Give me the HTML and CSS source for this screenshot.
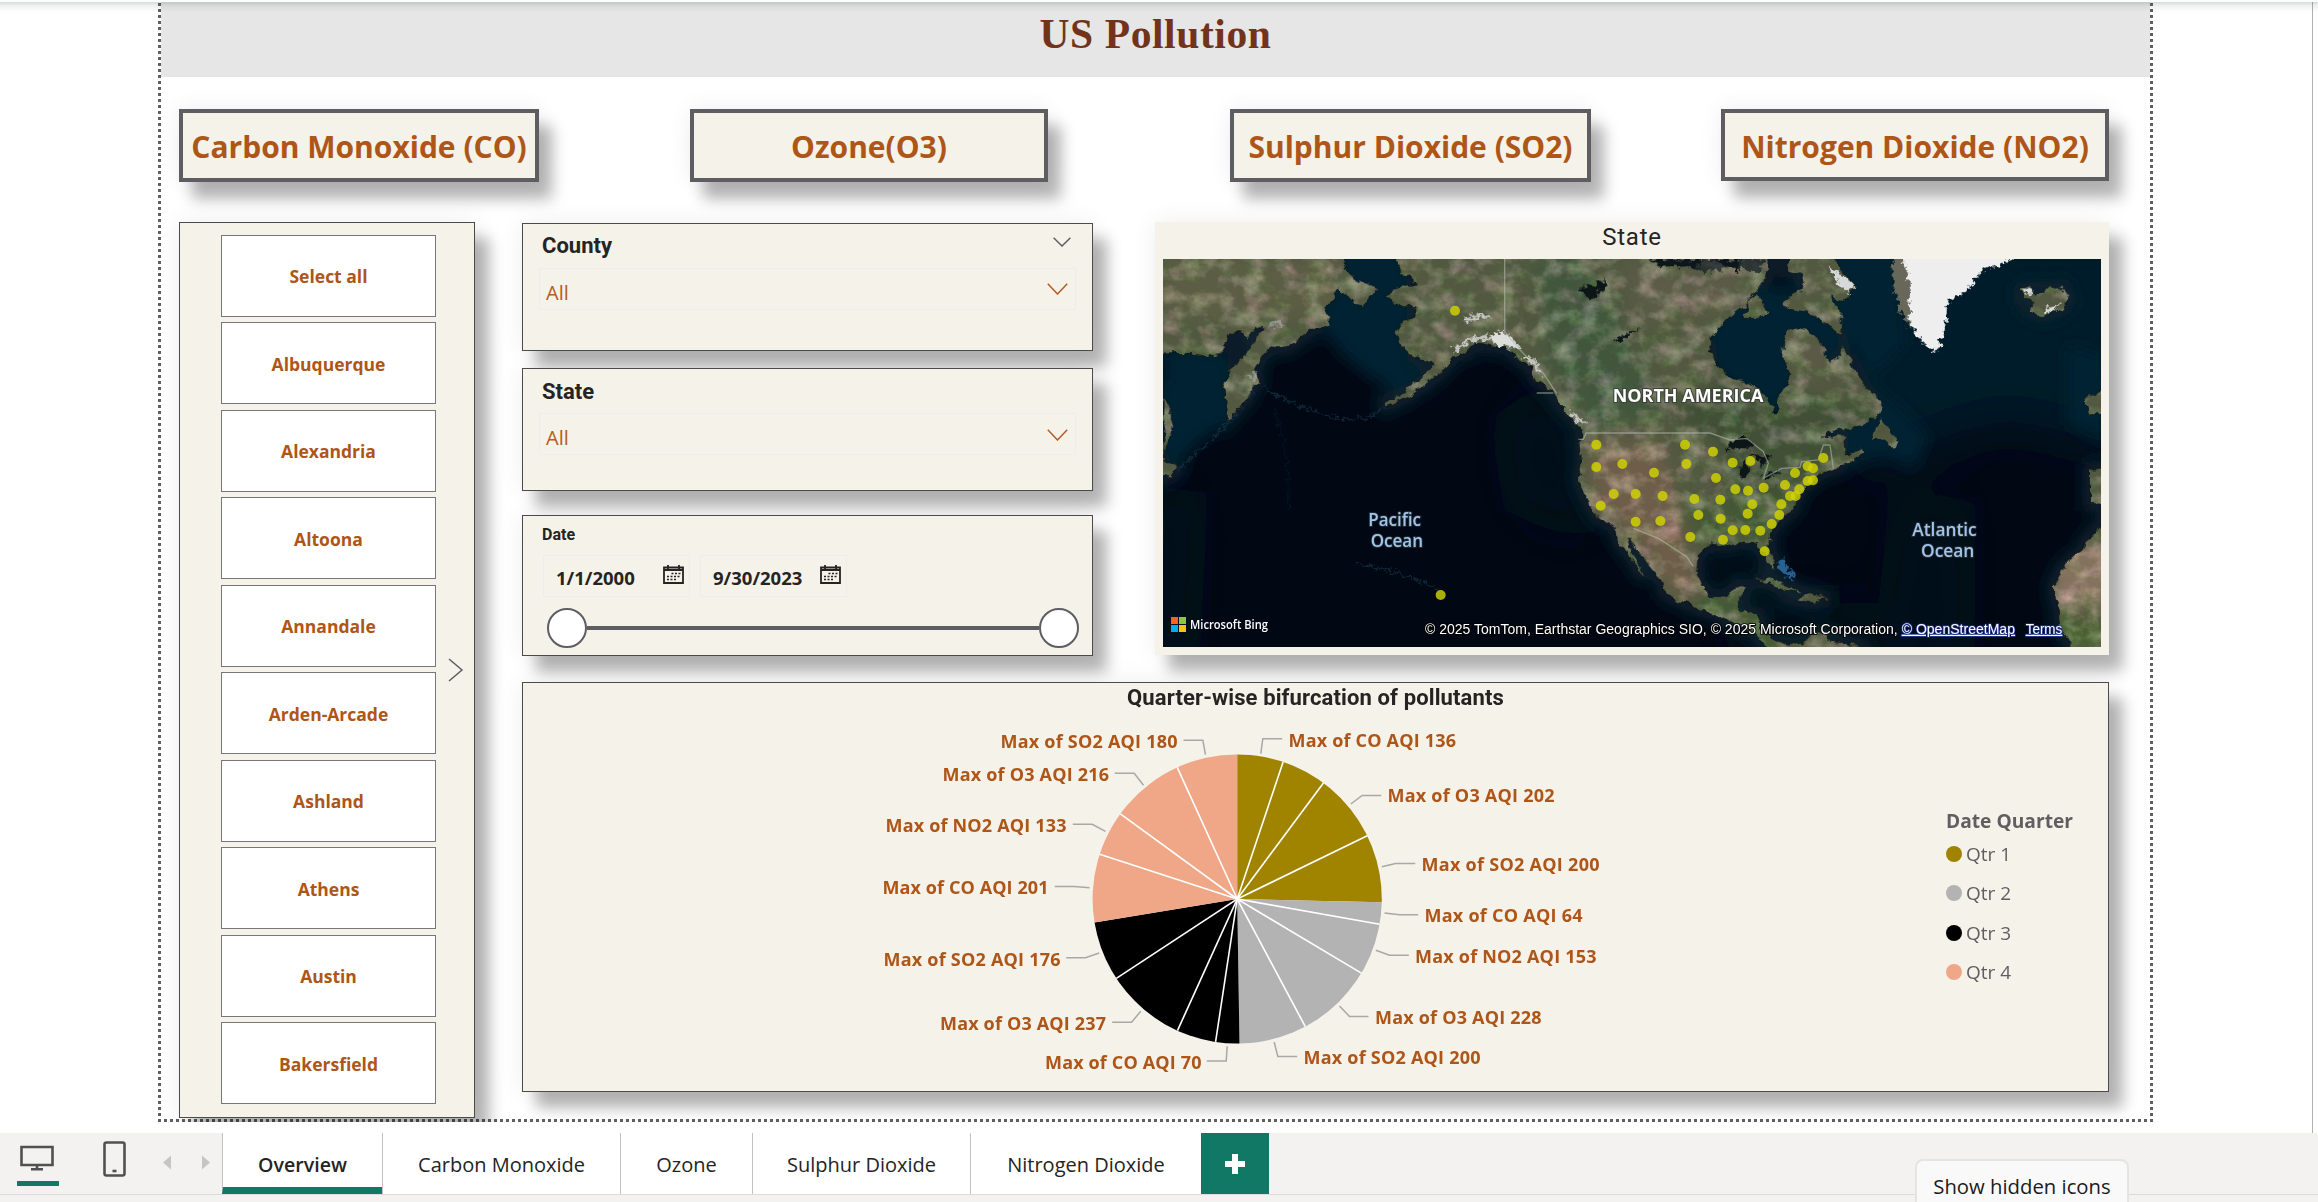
FILE: index.html
```html
<!DOCTYPE html>
<html lang="en">
<head>
<meta charset="utf-8">
<title>US Pollution</title>
<link rel="stylesheet" href="styles.css">
</head>
<body>
<main class="workspace">
  <section class="report">
    <header class="banner"><h1>US Pollution</h1></header>
    <nav class="pollutants">
      <a class="pollutant co"><span>Carbon Monoxide (CO)</span></a>
      <a class="pollutant o3"><span>Ozone(O3)</span></a>
      <a class="pollutant so2"><span>Sulphur Dioxide (SO2)</span></a>
      <a class="pollutant no2"><span>Nitrogen Dioxide (NO2)</span></a>
    </nav>
    <div class="body">
      <aside class="card cities">
        <ul class="city-list">
          <li><span>Select all</span></li>
          <li><span>Albuquerque</span></li>
          <li><span>Alexandria</span></li>
          <li><span>Altoona</span></li>
          <li><span>Annandale</span></li>
          <li><span>Arden-Arcade</span></li>
          <li><span>Ashland</span></li>
          <li><span>Athens</span></li>
          <li><span>Austin</span></li>
          <li><span>Bakersfield</span></li>
        </ul>
        <svg class="next" width="16" height="24" viewBox="0 0 16 24"><path d="M1 1 14 12 1 23"/></svg>
      </aside>
      <div class="visuals">
        <div class="filters">
          <section class="card filter county">
            <div class="filter-head"><h2>County</h2><svg class="chev" width="18" height="10" viewBox="0 0 18 10"><path d="M.6.8 9 9 17.4.8"/></svg></div>
            <div class="select"><span>All</span><svg class="chev brown" width="21" height="12" viewBox="0 0 21 12"><path d="M.8.8 10.5 11 20.2.8"/></svg></div>
          </section>
          <section class="card filter state">
            <div class="filter-head"><h2>State</h2></div>
            <div class="select"><span>All</span><svg class="chev brown" width="21" height="12" viewBox="0 0 21 12"><path d="M.8.8 10.5 11 20.2.8"/></svg></div>
          </section>
          <section class="card date">
            <h2>Date</h2>
            <div class="dates">
              <div class="date-input"><span>1/1/2000</span><svg class="cal" width="21" height="19" viewBox="0 0 21 19"><path d="M1 2.500h19v15.500H1zM1 5h19M5 0v4M16 0v4"/><path class="grid" d="M8.500 8.500h9M4 11.500h13.500M4 14.500h10"/></svg></div>
              <div class="date-input"><span>9/30/2023</span><svg class="cal" width="21" height="19" viewBox="0 0 21 19"><path d="M1 2.500h19v15.500H1zM1 5h19M5 0v4M16 0v4"/><path class="grid" d="M8.500 8.500h9M4 11.500h13.500M4 14.500h10"/></svg></div>
            </div>
            <div class="slider"><i class="knob"></i><i class="track"></i><i class="knob"></i></div>
          </section>
        </div>
        <section class="card map">
          <h2>State</h2>
          <svg width="938" height="388" viewBox="69 147 2814 1164" preserveAspectRatio="none">
            <defs>
              <filter id="terrain" filterUnits="userSpaceOnUse" x="40" y="120" width="2870" height="1220" color-interpolation-filters="sRGB">
                <feTurbulence type="fractalNoise" baseFrequency=".035" numOctaves="3" seed="4" result="edge"/>
                <feDisplacementMap in="SourceGraphic" in2="edge" scale="28" xChannelSelector="R" yChannelSelector="G" result="land"/>
                <feTurbulence type="fractalNoise" baseFrequency=".016 .02" numOctaves="6" seed="23"/>
                <feColorMatrix values=".9 0 0 0 -.37  .7 .2 0 0 -.37  .8 0 .1 0 -.38  0 0 0 0 1" result="tone"/>
                <feComposite in="land" in2="tone" operator="arithmetic" k2="1" k3=".6" result="mix"/>
                <feComposite in="mix" in2="land" operator="in"/>
              </filter>
              <filter id="rough" filterUnits="userSpaceOnUse" x="40" y="120" width="2870" height="1220">
                <feTurbulence type="fractalNoise" baseFrequency=".06" numOctaves="3" seed="7" result="n"/>
                <feDisplacementMap in="SourceGraphic" in2="n" scale="34" xChannelSelector="R" yChannelSelector="G"/>
              </filter>
              <filter id="soft" filterUnits="userSpaceOnUse" x="-100" y="0" width="3200" height="1500"><feGaussianBlur stdDeviation="22"/></filter>
              <filter id="hazy" filterUnits="userSpaceOnUse" x="-300" y="-200" width="3600" height="1900"><feGaussianBlur stdDeviation="85"/></filter>
              <path id="siberia" d="M20 100H590L620 185 650 205 690 225 710 240 690 265 665 293 640 270 610 255 595 235 580 265 550 295 570 320 565 350 530 350 480 385 440 415 395 410 365 440 345 480 355 515 330 540 320 570 290 600 265 630 258 580 255 520 270 480 310 445 340 400 370 350 350 350 320 390 300 368 270 370 240 430 200 440 150 430 110 430 20 435ZM69 560 85 580 100 650 85 700 69 740ZM20 730 69 740 115 775 90 800 20 800Z"/>
              <path id="america" d="M765 100V147L790 190 835 225 800 225 760 240 738 258 770 285 825 290 825 320 785 335 765 370 785 410 820 440 860 455 880 460 850 500 790 545 730 580 735 590 800 560 860 520 910 480 940 440 980 430 1010 395 1050 410 1100 415 1140 450 1170 470 1190 510 1220 530 1250 570 1280 610 1330 660 1320 690 1325 760 1315 800 1335 860 1370 920 1420 950 1440 1000 1480 1050 1505 1095 1515 1105 1495 1060 1465 1000 1468 985 1510 1045 1565 1110 1575 1150 1680 1200 1720 1210 1790 1240 1840 1265 1870 1300 1900 1350H2190L2170 1311 2090 1290 2030 1268 1980 1300 1940 1305 1862 1270 1855 1215 1800 1205 1790 1180 1820 1130 1790 1125 1760 1160 1710 1165 1680 1120 1670 1080 1675 1030 1710 1000 1760 1010 1810 995 1850 1000 1870 1030 1880 1060 1900 1080 1905 1055 1885 1010 1890 970 1920 930 1960 900 1965 870 1990 835 2030 800 2070 775 2080 780 2110 765 2170 730 2160 715 2120 735 2110 700 2120 680 2060 680 2040 690 2070 665 2120 655 2160 650 2210 620 2230 590 2210 560 2170 530 2150 480 2120 430 2105 400 2100 440 2070 455 2050 420 2040 390 2000 355 1960 350 1935 360 1930 410 1925 450 1950 490 1940 530 1915 550 1910 580 1920 610 1900 610 1890 580 1850 530 1800 510 1750 490 1730 450 1710 420 1720 370 1770 320 1815 290 1840 245 1870 220 1885 180 1880 100Z"/>
              <path id="isles" d="M1950 100V147L1940 180 1990 190 1980 240 1930 270 1940 300 2010 310 2070 350 2110 380 2105 310 2070 260 2120 270 2150 220 2110 190 2060 100ZM2222 625 2190 690 2230 690 2260 715 2270 690 2250 660ZM1815 325 1822 280 1845 245 1890 310 1845 325ZM2645 240 2670 230 2685 255 2720 235 2770 230 2788 270 2770 295 2710 320 2665 300 2680 280 2645 265ZM1845 1112 1880 1100 1930 1118 1985 1145 1930 1140 1890 1118ZM1970 1168 2010 1150 2070 1168 2010 1178ZM2835 560 2920 530V605L2845 615ZM2852 780 2920 775V885L2852 880Z"/>
              <path id="africa" d="M2920 935 2883 945 2840 990 2830 1020 2770 1070 2740 1130 2755 1200 2760 1250 2790 1300 2800 1350H2920Z"/>
              <clipPath id="shape"><use href="#siberia"/><use href="#america"/><use href="#isles"/><use href="#africa"/></clipPath>
            </defs>
            <rect x="69" y="147" width="2814" height="1164" fill="#010814"/>
            <g filter="url(#hazy)">
              <path fill="#041a2a" d="M2000 50H3100V750L2600 620 2350 700 2200 800 2100 500Z"/>
              <path fill="#04141f" d="M2300 900 2450 850 2450 1400H2250ZM1700 1180H2150V1400H1900Z"/>
              <path fill="#03121f" d="M1250 500 1100 640 1150 900 1350 1000ZM-60 820 150 850 120 1400H-60Z"/>
            </g>
            <g filter="url(#soft)">
              <g fill="none" stroke="#07222f" stroke-width="46"><use href="#siberia"/><use href="#america"/><use href="#isles"/><use href="#africa"/></g>
              <path fill="#062331" d="M600 100H800V460L860 490 760 540 700 510 600 430 550 350ZM69 430H260V630L100 770 69 700ZM1700 250 2000 230 2100 400 1900 620 1750 500ZM1960 100H2270L2300 400 2200 500 2100 330ZM2120 600 2250 560 2370 680 2320 780 2250 740 2130 760ZM2780 400 2900 440V700L2780 640Z"/>
              <path fill="#010b18" d="M1740 1050 1850 1040 1800 1100 1720 1110Z"/>
            </g>
            <g filter="url(#rough)" fill="none" stroke="#123344" stroke-width="5" opacity=".7">
              <path d="M370 530Q450 585 570 618T740 580M345 540Q260 660 110 780M650 1060 780 1090 900 1140"/>
              <path d="M400 600Q450 700 445 900" opacity=".4"/>
            </g>
            <g filter="url(#terrain)">
              <g fill="#525940"><use href="#siberia"/><use href="#america"/><use href="#isles"/><use href="#africa"/></g>
              <g clip-path="url(#shape)"><g filter="url(#soft)">
                <path fill="#5f6147" d="M69 147H600V300L400 330 69 330Z" opacity=".7"/>
                <path fill="#43563e" d="M1180 140H1330L1460 380 1560 620 1350 640 1230 480Z"/>
                <path fill="#3f5035" d="M1730 500 2000 560 2230 600 2000 790 1900 930 1780 960 1740 700 1600 620Z"/>
                <path fill="#6d5d49" d="M1350 700 1560 700 1620 900 1680 1160 1600 1150 1480 980 1360 880Z"/>
                <path fill="#5c5c46" d="M1450 160 1820 180 1780 300 1500 330ZM1960 360 2080 440 2000 520Z"/>
                <path fill="#455834" d="M1640 900 1960 850 1900 1000 1680 1010ZM1650 1150 1900 1190V1350H1750Z"/>
                <path fill="#84725e" d="M2740 1000H2920V1190H2740Z"/>
                <path fill="#4b5d35" d="M2740 1210H2920V1350H2740Z"/>
              </g></g>
            </g>
            <g filter="url(#rough)">
              <path fill="#67685a" d="M2255 100H2310V360L2280 300 2262 240Z"/>
              <path fill="#eeeeef" d="M2290 100V147L2305 200 2310 340 2340 390 2390 425 2405 380 2420 320 2430 270 2480 240 2530 180 2640 140V100Z"/>
              <path fill="#d5d9d9" d="M2065 165 2110 200 2145 220 2125 250 2090 210ZM2645 235 2680 240 2670 262ZM2715 290 2765 285 2720 315Z"/>
              <path fill="none" stroke="#c4c8c3" stroke-width="10" d="M940 420 1000 385 1060 385M1150 440 1185 455 1205 495M1290 610 1330 640M970 335 1010 315 1050 325"/>
              <path fill="#dcdedc" d="M1050 375 1080 362 1120 385 1140 420 1110 410 1070 405Z"/>
              <path fill="#0a1319" d="M1320 235 1390 210 1400 225 1350 275ZM1425 385 1500 355 1440 395ZM1750 710 1810 675 1845 705 1790 720ZM1800 770 1820 740 1825 800 1805 810ZM1830 735 1895 735 1870 770ZM1520 147H1680V170H1560ZM1700 147H1800V185ZM1865 800 1925 780 1880 810Z"/>
              <path fill="#0a1a22" d="M1560 147H1880L1850 190 1790 170 1700 185 1600 160Z" opacity=".7"/>
              <path fill="#286293" d="M1910 1060 1935 1045 1945 1080 1970 1105 1935 1100Z"/>
              <path fill="#acafaa" d="M320 500 350 485 350 515ZM380 345 420 325 435 345 405 350Z" opacity=".6"/>
            </g>
            <g fill="none" stroke="#b8c0b6" stroke-width="4" opacity=".55">
              <path d="M1094 147V365L1140 420 1210 490 1250 550M1190 549H1240M1315 688H1330L1338 669H1710L1770 690 1820 685 1870 725 1885 760 1870 805 1925 775 1980 772 1985 755 2035 750 2050 705 2070 705 2080 775M1480 955 1555 985 1640 1040 1660 1070"/>
            </g>
            <g class="pins">
              <circle cx="945" cy="302" r="15"/><circle cx="902" cy="1155" r="15"/><circle cx="1369" cy="704" r="15"/><circle cx="1369" cy="771" r="15"/><circle cx="1447" cy="762" r="15"/><circle cx="1421" cy="852" r="15"/><circle cx="1382" cy="887" r="15"/><circle cx="1487" cy="852" r="15"/><circle cx="1487" cy="935" r="15"/>
              <g transform="translate(1470)"><circle cx="165" cy="704" r="15"/><circle cx="249" cy="725" r="15"/><circle cx="169" cy="762" r="15"/><circle cx="72" cy="788" r="15"/><circle cx="308" cy="758" r="15"/><circle cx="361" cy="753" r="15"/><circle cx="258" cy="804" r="15"/><circle cx="98" cy="858" r="15"/><circle cx="193" cy="867" r="15"/><circle cx="205" cy="915" r="15"/><circle cx="91" cy="933" r="15"/><circle cx="181" cy="981" r="15"/><circle cx="271" cy="869" r="15"/><circle cx="272" cy="926" r="15"/><circle cx="279" cy="989" r="15"/><circle cx="316" cy="838" r="15"/><circle cx="354" cy="842" r="15"/><circle cx="401" cy="833" r="15"/><circle cx="367" cy="883" r="15"/><circle cx="353" cy="911" r="15"/><circle cx="308" cy="961" r="15"/><circle cx="346" cy="960" r="15"/><circle cx="391" cy="962" r="15"/><circle cx="404" cy="1024" r="15"/><circle cx="425" cy="942" r="15"/><circle cx="448" cy="915" r="15"/><circle cx="454" cy="883" r="15"/><circle cx="480" cy="858" r="15"/><circle cx="497" cy="858" r="15"/><circle cx="508" cy="838" r="15"/><circle cx="465" cy="825" r="15"/><circle cx="495" cy="789" r="15"/><circle cx="533" cy="769" r="15"/><circle cx="549" cy="775" r="15"/><circle cx="533" cy="813" r="15"/><circle cx="549" cy="811" r="15"/><circle cx="580" cy="744" r="15"/></g>
            </g>
            <g class="place">
              <text class="continent" x="1418" y="577" textLength="452" lengthAdjust="spacingAndGlyphs">NORTH AMERICA</text>
              <text x="685" y="948" textLength="158" lengthAdjust="spacingAndGlyphs">Pacific</text>
              <text x="692" y="1012" textLength="157" lengthAdjust="spacingAndGlyphs">Ocean</text>
              <text x="2317" y="978" textLength="193" lengthAdjust="spacingAndGlyphs">Atlantic</text>
              <text x="2343" y="1040" textLength="160" lengthAdjust="spacingAndGlyphs">Ocean</text>
            </g>
            <path fill="#f26522" d="M93 1221h21v21H93z"/><path fill="#8dc63f" d="M117 1221h21v21h-21z"/><path fill="#00aeef" d="M93 1245h21v21H93z"/><path fill="#ffc20e" d="M117 1245h21v21h-21z"/>
            <text class="bing" x="150" y="1257" textLength="234" lengthAdjust="spacingAndGlyphs">Microsoft Bing</text>
            <g class="credits">
              <text x="855" y="1271" textLength="1418" lengthAdjust="spacingAndGlyphs">© 2025 TomTom, Earthstar Geographics SIO, © 2025 Microsoft Corporation,</text>
              <text class="link" x="2285" y="1271" textLength="340" lengthAdjust="spacingAndGlyphs">© OpenStreetMap</text>
              <text class="link" x="2657" y="1271" textLength="110" lengthAdjust="spacingAndGlyphs">Terms</text>
            </g>
          </svg>
        </section>
        <section class="card quarters">
          <h2>Quarter-wise bifurcation of pollutants</h2>
          <svg class="pie" width="760" height="370" viewBox="861.5 715 760 370">
            <g transform="translate(1237.700 899)">
              <path fill="#a08400" d="M0 0V-144.600A144.600 144.600 0 0 1 144.560 3.360Z"/>
              <path fill="#b3b3b3" d="M0 0 144.560 3.360A144.600 144.600 0 0 1 2.270 144.580Z"/>
              <path fill="#000" d="M0 0 2.270 144.580A144.600 144.600 0 0 1 -142.660 23.600Z"/>
              <path fill="#f0a787" d="M0 0-142.660 23.600A144.600 144.600 0 0 1 0-144.600Z"/>
              <g stroke="#fff" stroke-width="1.600">
                <path d="M0 0V-144.600" transform="rotate(18.510)"/><path d="M0 0V-144.600" transform="rotate(36.610)"/><path d="M0 0V-144.600" transform="rotate(64.100)"/><path d="M0 0V-144.600" transform="rotate(100.040)"/><path d="M0 0V-144.600" transform="rotate(120.860)"/><path d="M0 0V-144.600" transform="rotate(151.900)"/><path d="M0 0V-144.600" transform="rotate(188.600)"/><path d="M0 0V-144.600" transform="rotate(204.400)"/><path d="M0 0V-144.600" transform="rotate(236.700)"/><path d="M0 0V-144.600" transform="rotate(288)"/><path d="M0 0V-144.600" transform="rotate(306.100)"/><path d="M0 0V-144.600" transform="rotate(335.500)"/>
              </g>
            </g>
            <g class="leaders">
              <path d="M1184 740.300H1203.300L1206 754.700M1115.300 773.300H1134.700L1144 785.300M1073.300 824.300H1092.700L1106 831.300M1055.300 886.500H1075L1090 887.700M1066.700 957.700H1086L1099.700 953M1112.700 1022.300H1132L1141.300 1011.300M1207.300 1061H1226.700L1227.700 1046.300M1282.700 738.700H1263.300L1261.300 753.700M1381.700 795.500H1362.700L1351.300 804M1415.700 863.500H1396L1382.300 866.700M1418.700 914.700H1400L1385 913M1409.300 955.300H1390L1376.300 950.300M1369 1016.500H1350L1340 1006M1297.700 1056.500H1278.300L1274.700 1042"/>
            </g>
            <g class="labels">
              <text x="1001" y="748" textLength="177">Max of SO2 AQI 180</text>
              <text x="943" y="781" textLength="166.500">Max of O3 AQI 216</text>
              <text x="886" y="832" textLength="181">Max of NO2 AQI 133</text>
              <text x="883" y="894" textLength="166">Max of CO AQI 201</text>
              <text x="884" y="966" textLength="177">Max of SO2 AQI 176</text>
              <text x="940.500" y="1030" textLength="166">Max of O3 AQI 237</text>
              <text x="1045.500" y="1069" textLength="156.500">Max of CO AQI 70</text>
              <text x="1289" y="747" textLength="167.500">Max of CO AQI 136</text>
              <text x="1388" y="802" textLength="167">Max of O3 AQI 202</text>
              <text x="1422" y="871" textLength="178">Max of SO2 AQI 200</text>
              <text x="1425" y="922" textLength="158">Max of CO AQI 64</text>
              <text x="1415.500" y="963" textLength="181.500">Max of NO2 AQI 153</text>
              <text x="1375.500" y="1024" textLength="166.500">Max of O3 AQI 228</text>
              <text x="1304" y="1064" textLength="177">Max of SO2 AQI 200</text>
            </g>
          </svg>
          <div class="legend">
            <h3><span>Date Quarter</span></h3>
            <ul><li class="q1"><span>Qtr 1</span></li><li class="q2"><span>Qtr 2</span></li><li class="q3"><span>Qtr 3</span></li><li class="q4"><span>Qtr 4</span></li></ul>
          </div>
        </section>
      </div>
    </div>
  </section>
</main>
<footer class="tabbar">
  <div class="views">
    <svg class="desktop" width="34" height="26" viewBox="0 0 34 26"><path d="M1.500 2h31v18h-31zM17 20v4M11 24.300h12"/></svg>
    <svg class="phone" width="23" height="36" viewBox="0 0 23 36"><rect x="1.500" y="1.500" width="20" height="33" rx="2"/><path d="M9.500 30h4"/></svg>
    <svg class="arrow" width="8" height="15" viewBox="0 0 9 16"><path d="M9 0V16L0 8z"/></svg>
    <svg class="arrow right" width="8" height="15" viewBox="0 0 9 16"><path d="M0 0V16L9 8z"/></svg>
  </div>
  <nav class="tabs">
    <a class="tab active t1"><span>Overview</span></a>
    <a class="tab t2"><span>Carbon Monoxide</span></a>
    <a class="tab t3"><span>Ozone</span></a>
    <a class="tab t4"><span>Sulphur Dioxide</span></a>
    <a class="tab t5"><span>Nitrogen Dioxide</span></a>
    <a class="add"><svg width="20" height="20" viewBox="0 0 20 20"><path d="M10 0V20M0 10H20"/></svg></a>
  </nav>
</footer>
<div class="tooltip"><span>Show hidden icons</span></div>
</body>
</html>
```
FILE: styles.css
```css
* { box-sizing: border-box; }

body {
  margin: 0;
  width: 2318px;
  height: 1202px;
  overflow: hidden;
  position: relative;
  display: flex;
  flex-direction: column;
  background: #fff;
  font-family: "Open Sans", "Noto Sans", sans-serif;
  color: #252423;
}

h1, h2, h3, ul { margin: 0; padding: 0; list-style: none; }
svg { display: block; flex: none; }
span, h1, h2 { white-space: nowrap; }

.workspace {
  position: relative;
  height: 1133px;
  padding-left: 158px;
  border-right: 1px solid #b3b0ad;
  width: 2313px;
}

.workspace::before {
  content: "";
  position: absolute;
  z-index: 2;
  top: 0;
  left: 0;
  width: 2318px;
  height: 12px;
  background: linear-gradient(#fdfdfd 0 1.5px, rgba(60, 75, 70, .2) 2px, rgba(60, 75, 70, .08) 6px, rgba(60, 75, 70, 0));
}

.report {
  width: 1995px;
  height: 1122px;
  padding: 0 3px;
  overflow: hidden;
  background:
    repeating-linear-gradient(90deg, #5f5e60 0 3px, transparent 3px 6px) 0 100% / 100% 3px no-repeat,
    repeating-linear-gradient(#5f5e60 0 3px, transparent 3px 6px) 0 3px / 3px 100% no-repeat,
    repeating-linear-gradient(#5f5e60 0 3px, transparent 3px 6px) 100% 3px / 3px 100% no-repeat;
}

.banner {
  height: 77px;
  background: #e6e6e6;
  display: flex;
  justify-content: center;
  padding-top: 9px;
}

.banner h1 {
  font: bold 41.500px/50px "Liberation Serif", serif;
  letter-spacing: .6px;
  color: #73331b;
}

.pollutants {
  display: flex;
  padding: 32px 0 0 18px;
  height: 145px;
}

.pollutant {
  display: flex;
  align-items: center;
  justify-content: center;
  height: 72.500px;
  padding-top: 3px;
  border: 4.500px solid #5e5d61;
  background: #f5f2ea;
  color: #ae5518;
  font-weight: 700;
  font-size: 30px;
  box-shadow: 13px 17px 14px rgba(0, 0, 0, .29), 0 0 24px rgba(0, 0, 0, .07);
}

.co { width: 360px; }
.o3 { width: 358px; margin-left: 151px; }
.so2 { width: 361px; margin-left: 182px; }
.no2 { width: 388px; height: 71.500px; margin-left: 130px; }

.body { display: flex; padding-left: 18px; gap: 47px; }

.card {
  background: #f5f2ea;
  border: 1px solid #4b4b4b;
  box-shadow: 14px 16px 14px rgba(0, 0, 0, .29), 0 0 24px rgba(0, 0, 0, .07);
}

.cities {
  width: 296px;
  height: 896px;
  display: flex;
  align-items: center;
  padding-left: 41px;
}

.city-list {
  width: 215px;
  display: grid;
  grid-auto-rows: 82px;
  row-gap: 5.500px;
  margin-top: -1px;
}

.city-list li {
  display: flex;
  align-items: center;
  justify-content: center;
  background: #fff;
  border: 1px solid #77767a;
  font-size: 17.500px;
  font-weight: 700;
  color: #ae5518;
  padding-top: 1px;
}

.next { margin: 0 0 0 12px; }
.next path, .chev path { fill: none; stroke: #5e5d61; stroke-width: 1.500; }
.chev.brown path { stroke: #b55c22; }

.visuals {
  display: grid;
  grid-template-columns: 571px 954px;
  grid-template-rows: 434px 410px;
  column-gap: 62px;
  row-gap: 26px;
}

.filters { display: flex; flex-direction: column; padding-top: 1px; }
.county { height: 128px; }
.state { height: 123px; margin-top: 17px; }
.date { height: 141px; margin-top: 24px; padding: 0 16px 0 20px; }

.filter { padding: 0 16px; }
.filter h2, .date h2, .quarters h2 { font-family: Roboto, sans-serif; font-weight: 700; }
.filter-head { height: 44px; padding: 0 5px 0 3px; display: flex; justify-content: space-between; }
.filter-head h2 { font-size: 22px; line-height: 26px; margin-top: 9px; }
.state .filter-head h2 { margin-top: 10px; }
.filter-head .chev { margin-top: 13px; }

.select {
  height: 42px;
  border: 1px solid #eeede8;
  display: flex;
  justify-content: space-between;
  padding: 0 7px 0 6px;
  font-size: 20px;
  line-height: 47px;
  color: #b55c22;
}

.select .chev { margin-top: 14px; }
.state .select .chev { margin-top: 15px; }

.date h2 { font-size: 16px; line-height: 20px; margin: 9px 0 0 -1px; height: 30px; }
.dates { display: flex; gap: 10px; }

.date-input {
  width: 147px;
  height: 42px;
  border: 1px solid #eeede8;
  display: flex;
  justify-content: space-between;
  padding: 0 5px 0 12px;
  font-size: 18.500px;
  font-weight: 700;
  line-height: 44px;
}

.cal { margin-top: 9px; }
.cal path { fill: none; stroke: #252423; stroke-width: 1.800; }
.cal .grid { stroke-dasharray: 2 1.500; stroke-width: 1.600; }

.slider { display: flex; align-items: center; margin: 11px 0 0 4px; width: 532px; }
.knob { width: 40px; height: 40px; border: 2.500px solid #5e5d61; border-radius: 50%; background: #fff; }
.track { flex: 1; height: 4px; background: #5e5d61; }

.map { border: 0; padding: 0 8px; height: 433px; }
.map h2 { font: 400 24px/30px Roboto, sans-serif; letter-spacing: .8px; height: 37px; text-align: center; }

.pins { fill: #d2d400; fill-opacity: .82; }
.place text { font: 600 54px "Open Sans", sans-serif; fill: #a3c4e8; stroke: #1c2a33; stroke-width: 6; paint-order: stroke; }
.place .continent { font-weight: 700; fill: #fff; stroke: #3c4238; }
.bing { font: 600 40px "Open Sans", sans-serif; fill: #fff; }
.credits text { font: 42px "Liberation Sans", sans-serif; fill: #fff; stroke: #000; stroke-width: 5; paint-order: stroke; }
.credits .link { stroke: #1c2f86; text-decoration: underline; }

.quarters {
  grid-column: 1 / 3;
  display: grid;
  grid-template-columns: 338px 1085px 164px;
  grid-template-rows: 32px 1fr;
}

.quarters h2 { grid-column: 1 / 4; text-align: center; font-size: 22px; line-height: 29px; letter-spacing: .12px; margin-left: -2px; }
.pie { grid-column: 2; }
.leaders path { fill: none; stroke: #a9a8a1; stroke-width: 1.500; }
.labels text { font: 700 18px "Open Sans", sans-serif; fill: #ae5518; }

.legend { padding-top: 92px; color: #605e62; font-size: 19px; }
.legend h3 { font-size: 19.200px; line-height: 27px; }
.legend li { display: flex; align-items: center; gap: 4px; height: 39.500px; }
.legend li::before { content: ""; width: 16px; height: 16px; border-radius: 50%; background: currentColor; }
.legend li span { color: #605e62; }
.legend .q1 { color: #a08400; }
.legend .q2 { color: #b3b3b3; }
.legend .q3 { color: #000; }
.legend .q4 { color: #f0a787; }

.tabbar {
  height: 69px;
  background: linear-gradient(#dcdbda, #dcdbda) 0 61px / 100% 1px no-repeat #f3f2f1;
  display: flex;
}

.views {
  width: 222px;
  height: 61px;
  display: flex;
  padding-left: 20px;
  background: linear-gradient(#117865, #117865) 17px 48px / 42px 5px no-repeat;
}

.views path, .views rect { fill: none; stroke: #505052; stroke-width: 2.600; }
.desktop { margin-top: 12px; }
.phone { margin: 8px 0 0 49px; }
.arrow { margin: 22px 0 0 37px; }
.arrow.right { margin-left: 31px; }
.views .arrow path { fill: #c6c5c4; stroke: none; }

.tabs { display: flex; height: 61px; }

.tab {
  background: #fff;
  border-left: 1px solid #c4c3c2;
  display: flex;
  align-items: center;
  justify-content: center;
  font-size: 20px;
  padding-top: 2px;
}

.active { font-weight: 600; font-size: 19.600px; border-bottom: 7px solid #117865; padding-top: 9px; }
.t1 { width: 160px; }
.t2 { width: 238px; }
.t3 { width: 132px; }
.t4 { width: 218px; }
.t5 { width: 231px; }
.add { width: 68px; background: #117865; display: flex; align-items: center; justify-content: center; }
.add path { stroke: #fff; stroke-width: 6; }

.tooltip {
  position: absolute;
  left: 1915px;
  top: 1159px;
  width: 214px;
  height: 60px;
  border: 2px solid #e4e4e2;
  border-radius: 8px;
  background: #f9f9f9;
  color: #1b1b1b;
  font-size: 20.300px;
  line-height: 51px;
  text-align: center;
}
```
